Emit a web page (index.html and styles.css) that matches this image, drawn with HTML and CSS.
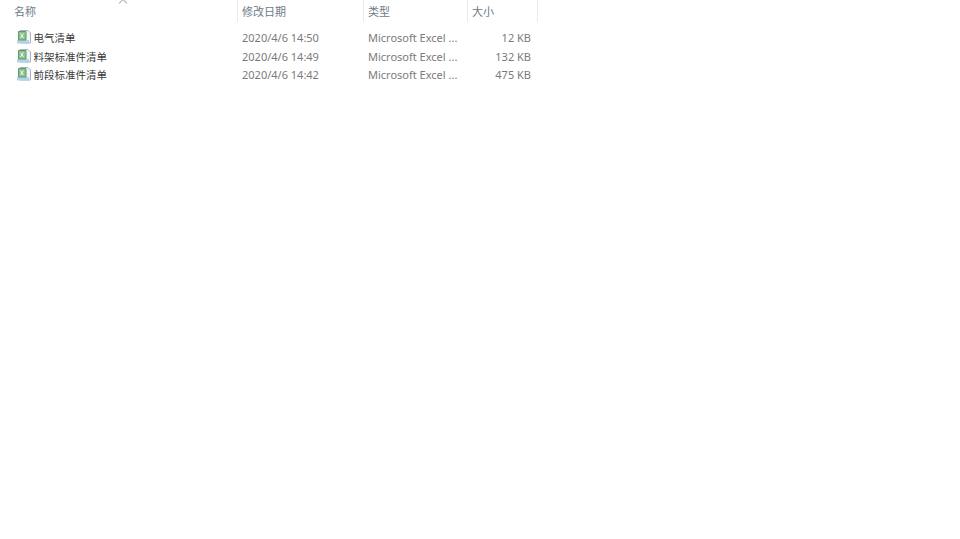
FILE: index.html
```html
<!DOCTYPE html>
<html lang="zh-CN">
<head>
    <meta charset="UTF-8">
    <title>文件列表</title>
    <link rel="stylesheet" href="styles.css">
</head>
<body>

    <svg width="0" height="0" class="defs">
        <symbol id="xls" viewBox="0 0 16 15">
            <path d="M4 .5h8l2.500 2.500v10H4z" fill="#f2f5f8" stroke="#a9b3bd"/>
            <path d="M1 10h12v3.500H1z" fill="#b4d2ea"/>
            <path d="M2.500 1.500h7.500v8.500H2.500z" fill="#8cc08c" stroke="#5f9c68"/>
            <path d="M4.500 3.500l3 4.500M7.500 3.500l-3 4.500" stroke="#f4f8f2" stroke-width="1"/>
        </symbol>
    </svg>

    <div class="list">
        <div class="head">
            <div class="col name">名称<span class="sort"></span></div>
            <div class="col date">修改日期</div>
            <div class="col type">类型</div>
            <div class="col size">大小</div>
        </div>

        <div class="row">
            <div class="col name"><svg class="icon"><use href="#xls"/></svg>电气清单</div>
            <div class="col date">2020/4/6 14:50</div>
            <div class="col type">Microsoft Excel ...</div>
            <div class="col size">12 KB</div>
        </div>
        <div class="row">
            <div class="col name"><svg class="icon"><use href="#xls"/></svg>料架标准件清单</div>
            <div class="col date">2020/4/6 14:49</div>
            <div class="col type">Microsoft Excel ...</div>
            <div class="col size">132 KB</div>
        </div>
        <div class="row">
            <div class="col name"><svg class="icon"><use href="#xls"/></svg>前段标准件清单</div>
            <div class="col date">2020/4/6 14:42</div>
            <div class="col type">Microsoft Excel ...</div>
            <div class="col size">475 KB</div>
        </div>
    </div>

</body>
</html>
```

FILE: styles.css
```css
body {
    margin: 0;
    background-color: #fff;
    font-family: "Noto Sans", "Noto Sans CJK SC", sans-serif;
    font-size: 11px;
    color: #7a7a7a;
}

.defs {
    display: block;
}

.list {
    width: 538px;
}

.head {
    display: flex;
    height: 22px;
    margin-bottom: 6.5px;
    color: #6f7a86;
}

.head .col {
    position: relative;
    display: flex;
    align-items: center;
    height: 22px;
    border-right: 1px solid #eaeaea;
}

.row {
    display: flex;
    align-items: center;
    height: 18.6px;
}

.col {
    box-sizing: border-box;
    padding-left: 4px;
    white-space: nowrap;
}

.name {
    width: 238px;
    padding-left: 14px;
}

.row .name {
    display: flex;
    align-items: center;
    padding-left: 16px;
    font-size: 10.5px;
    color: #3a3a3a;
}

.date {
    width: 126px;
}

.type {
    width: 104px;
}

.size {
    width: 70px;
}

.row .size {
    padding-right: 7px;
    text-align: right;
}

.icon {
    width: 16px;
    height: 15px;
    margin-right: 1.5px;
}

/* little caret over the name column */
.sort {
    position: absolute;
    left: 120px;
    top: 0;
    width: 5px;
    height: 5px;
    border-left: 1px solid #b0b0b0;
    border-top: 1px solid #b0b0b0;
    transform: rotate(45deg);
}
```
